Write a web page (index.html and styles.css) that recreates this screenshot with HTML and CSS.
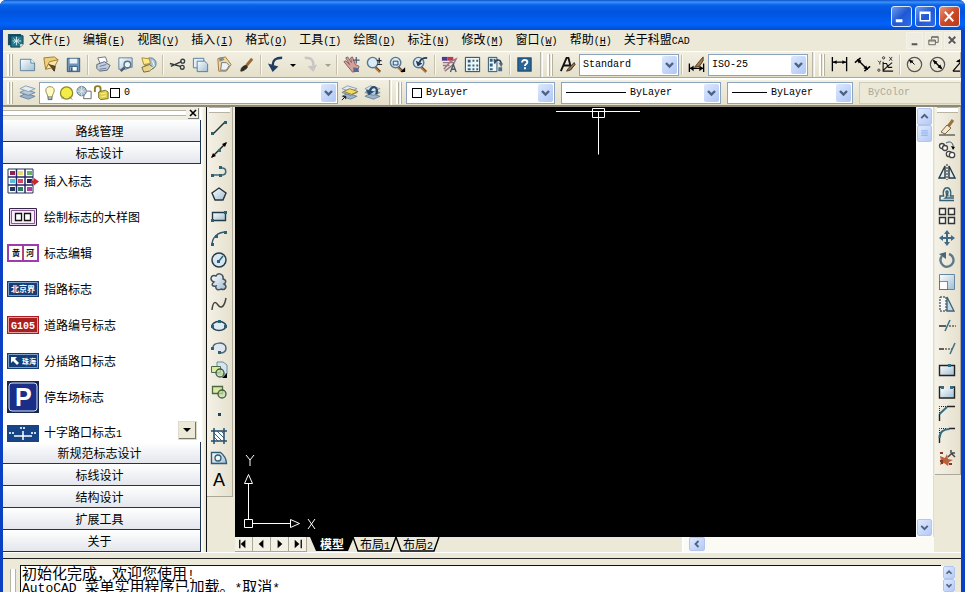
FILE: index.html
```html
<!DOCTYPE html>
<html lang="zh-CN">
<head>
<meta charset="utf-8">
<title>AutoCAD</title>
<link rel="stylesheet" href="styles.css">
</head>
<body>
<svg class="defs" aria-hidden="true">
  <defs>
    <linearGradient id="pale" x1="0" y1="0" x2="1" y2="1"><stop offset="0" stop-color="#fff"/><stop offset="1" stop-color="#9fbdd2"/></linearGradient>
    <symbol id="lens" viewBox="0 0 20 20"><path d="M10 12l6 6" stroke="#a87848" stroke-width="3"/><path d="M11 12l5 5" stroke="#5c4534" stroke-width="1"/><circle cx="8" cy="8" r="5.500" fill="#dcebf3" stroke="#587890" stroke-width="1.500"/></symbol>
    <symbol id="sheets" viewBox="0 0 20 20"><path d="M2 14l6-3 10 3-7 3z" fill="#9db4c8" stroke="#6d879e"/><path d="M2 10l6-3 10 3-7 3z" fill="#b8cbd9" stroke="#6d879e"/><path d="M2 6l6-3 10 3-7 3z" fill="#e2ecf2" stroke="#8ba0b2"/></symbol>
    <symbol id="down" viewBox="0 0 15 18"><path d="M4 7l3.500 3.500L11 7" fill="none" stroke="#4d6185" stroke-width="2.400"/></symbol>
    <symbol id="drop" viewBox="0 0 12 20"><path d="M3 9h6l-3 3z"/></symbol>
  </defs>
</svg>
<div class="app">
  <header class="title">
    <button class="win" aria-label="最小化"><svg viewBox="0 0 20 20"><path d="M4 13h7v3H4z" fill="#fff"/></svg></button>
    <button class="win" aria-label="最大化"><svg viewBox="0 0 20 20"><path d="M4.500 5.500h10v9h-10zM4 6.500h11" fill="none" stroke="#fff" stroke-width="1.600"/></svg></button>
    <button class="win close" aria-label="关闭"><svg viewBox="0 0 20 20"><path d="M5 5l9 10M14 5L5 15" stroke="#fff" stroke-width="2"/></svg></button>
  </header>
  <div class="frame">
    <nav class="menu">
      <svg class="logo" viewBox="0 0 18 18"><path d="M1 2h14v12H1z" fill="#174f68"/><path d="M4 4h13v9l-3 3H4z" fill="#257488" stroke="#103c50"/><path d="M10 5v9M6 9.500h9M7 7l6 5M13 7l-6 5" stroke="#d6f3f2"/><path d="M14 16v-3h3z" fill="#fff"/></svg>
      <button>文件<span class="m">(<u>F</u>)</span></button><button>编辑<span class="m">(<u>E</u>)</span></button><button>视图<span class="m">(<u>V</u>)</span></button><button>插入<span class="m">(<u>I</u>)</span></button><button>格式<span class="m">(<u>O</u>)</span></button><button>工具<span class="m">(<u>T</u>)</span></button><button>绘图<span class="m">(<u>D</u>)</span></button><button>标注<span class="m">(<u>N</u>)</span></button><button>修改<span class="m">(<u>M</u>)</span></button><button>窗口<span class="m">(<u>W</u>)</span></button><button>帮助<span class="m">(<u>H</u>)</span></button><button>关于科盟<span class="m">CAD</span></button>
      <div class="mdi">
        <button aria-label="最小化文档"><svg viewBox="0 0 16 16"><path d="M5 12h6" stroke="#555" stroke-width="2"/></svg></button>
        <button aria-label="还原文档"><svg viewBox="0 0 16 16"><path d="M6 7V4h7v6h-3M6 4.500h7M3 7.500h7v5H3zM3 8.500h7" fill="none" stroke="#66645c"/></svg></button>
        <button aria-label="关闭文档"><svg viewBox="0 0 16 16"><path d="M4 4l7 7M11 4l-7 7" stroke="#555" stroke-width="2"/></svg></button>
      </div>
    </nav>

    <div class="bar">
      <div class="band">
        <i class="grip"></i>
        <button class="tool" aria-label="新建"><svg viewBox="0 0 20 20"><path d="M2.500 4.500h11l4 4v8h-15z" fill="url(#pale)" stroke="#5c7f9c"/><path d="M13.500 4.500v4h4" fill="#fff" stroke="#5c7f9c"/></svg></button>
        <button class="tool" aria-label="打开"><svg viewBox="0 0 20 20"><path d="M3 3l11-1 4 3-8 3-5 7-1-5z" fill="#f0cf7c" stroke="#a17b2d"/><path d="M5 15l4-8 9-2-4 8z" fill="#fbe6a8" stroke="#a17b2d"/><path d="M8 10l7 2-1 5-2-2" fill="#654b23" stroke="#433418"/></svg></button>
        <button class="tool" aria-label="保存"><svg viewBox="0 0 20 20"><path d="M3.500 3.500h13v14h-13z" fill="#6f96ba" stroke="#34597c"/><path d="M6 4h8v5H6z" fill="#eaf1f5"/><path d="M6 12h8v5H6z" fill="#f8fafa" stroke="#34597c"/><path d="M8 13v4" stroke="#34597c" stroke-width="2"/></svg></button>
        <i class="sep"></i>
        <button class="tool" aria-label="打印"><svg viewBox="0 0 20 20"><path d="M5 3l8-1 2 5-7 3z" fill="#fff" stroke="#66758c"/><path d="M4 10l8-3 6 4-3 5-8 1-3-3z" fill="#c4cddc" stroke="#56657b"/><path d="M7 12l7-2M7 15l7-1" stroke="#667798"/></svg></button>
        <button class="tool" aria-label="打印预览"><svg viewBox="0 0 20 20"><path d="M3 3h14v10h-2l-5 2H3z" fill="url(#pale)" stroke="#5c7f9c"/><circle cx="12" cy="10" r="3.500" fill="#e9f3f8" stroke="#5c748a" stroke-width="1.500"/><path d="M9 13l-4 4" stroke="#4b5e70" stroke-width="2.500"/></svg></button>
        <button class="tool" aria-label="发布"><svg viewBox="0 0 20 20"><circle cx="12" cy="9" r="6" fill="#a9c3d8" stroke="#5a7890"/><path d="M3 3l8 1 1 5-7 1z" fill="#ffe887" stroke="#a88b32"/><path d="M3 13l8-3 4 3-4 4-6 1z" fill="#e7d58c" stroke="#77672e"/><path d="M14 6l2 5-4 4" fill="none" stroke="#fff"/></svg></button>
        <i class="sep"></i>
        <button class="tool" aria-label="剪切"><svg viewBox="0 0 20 20"><path d="M2 9l11 3M3 12l11-5" stroke="#303a3d" stroke-width="1.500"/><circle cx="15.500" cy="6.500" r="2" fill="none" stroke="#333c42" stroke-width="1.400"/><circle cx="15" cy="13" r="2" fill="none" stroke="#333c42" stroke-width="1.400"/></svg></button>
        <button class="tool" aria-label="复制"><svg viewBox="0 0 20 20"><path d="M2.500 3.500h11v10h-11z" fill="#e2eff6" stroke="#547c9b"/><path d="M6.500 6.500h8l3 3v8h-11z" fill="url(#pale)" stroke="#547c9b"/></svg></button>
        <button class="tool" aria-label="粘贴"><svg viewBox="0 0 20 20"><path d="M4 4l8-2 6 8-5 7H5z" fill="#f0d8a1" stroke="#a2783d"/><path d="M5 3l4-1 2 3-5 2z" fill="#848c93"/><path d="M8 8h5l3 3-3 5H7z" fill="#edf4f7" stroke="#6b7983"/></svg></button>
        <button class="tool" aria-label="特性匹配"><svg viewBox="0 0 20 20"><path d="M16 4l-6 7" stroke="#9b6b35" stroke-width="3"/><path d="M4 17c0-4 3-6 6-6l1 2c-2 2-4 4-7 4z" fill="#302c25" stroke="#302c25"/></svg></button>
        <i class="sep"></i>
        <button class="tool" aria-label="放弃"><svg viewBox="0 0 20 20"><path d="M17 3C9 3 7 6 7 11" fill="none" stroke="#223d61" stroke-width="2.600"/><path d="M2 9l11 3-6 6z" fill="#223d61"/></svg></button>
        <button class="drop" aria-label="放弃列表"><svg><use href="#drop"/></svg></button>
        <button class="tool" aria-label="重做"><svg viewBox="0 0 20 20"><path d="M4 3c8 0 9 3 9 8" fill="none" stroke="#c7c6c5" stroke-width="2.600"/><path d="M7 12l10-2-4 8z" fill="#c7c6c5"/></svg></button>
        <button class="drop off" aria-label="重做列表"><svg><use href="#drop"/></svg></button>
        <i class="sep"></i>
        <button class="tool" aria-label="平移"><svg viewBox="0 0 20 20"><path d="M2 7l2-1 4 4-4-7 2-1 4 6-1-5 2-1 3 8 4 2-2 5-5 1z" fill="#d5a09a" stroke="#855e63"/><path d="M12 13l5 1 1 4h-6z" fill="#536a91"/><path d="M15 2v7M11.500 5.500h7" stroke="#405a75" stroke-width="1.300"/></svg></button>
        <button class="tool" aria-label="实时缩放"><svg viewBox="0 0 20 20"><use href="#lens"/><path d="M15 3v6M12.500 6h5M13 10h5" stroke="#202c35" stroke-width="1.300"/></svg></button>
        <button class="tool" aria-label="窗口缩放"><svg viewBox="0 0 20 20"><use href="#lens"/><path d="M5.500 6.500h5v4h-5z" fill="none" stroke="#263d60"/><path d="M18 13v5h-5z"/></svg></button>
        <button class="tool" aria-label="缩放上一个"><svg viewBox="0 0 20 20"><use href="#lens"/><path d="M17 3c-5 0-7 1-8 5" fill="none" stroke="#233b58" stroke-width="2"/><path d="M5 6l7 3-5 3z" fill="#233b58"/></svg></button>
        <i class="sep"></i>
        <button class="tool" aria-label="特性"><svg viewBox="0 0 20 20"><path d="M2 2h6v4H2z" fill="#493c8e"/><path d="M8 2h6v4H8z" fill="#bd394e"/><path d="M3 8h12M3 11h7M4 15l7-8 6-3-3 6-9 7" fill="none" stroke="#967687" stroke-width="1.500"/><path d="M11 18l3-8 3 8M12 15h4" fill="none" stroke="#4a5866" stroke-width="1.400"/></svg></button>
        <button class="tool" aria-label="设计中心"><svg viewBox="0 0 20 20"><path d="M2.500 2.500h15v15h-15z" fill="#edf5f8" stroke="#1f3e5a"/><path d="M5 5h3v3H5zM10 5h2v2h-2zM14 5h2v2h-2zM5 10h3v2H5zM10 10h2v2h-2zM14 10h2v2h-2zM5 14h3v2H5zM10 14h2v2h-2zM14 14h2v2h-2z" fill="#35617c"/></svg></button>
        <button class="tool" aria-label="工具选项板"><svg viewBox="0 0 20 20"><path d="M2.500 2.500h9v15h-9z" fill="#edf5f8" stroke="#27506c"/><path d="M4 4h3v3H4zM8 4h2v3H8zM4 9h3v3H4zM4 14h3v2H4z" fill="#35617c"/><path d="M9 9c1-5 7-5 7 1" fill="none" stroke="#24405b" stroke-width="1.600"/><path d="M13 8l5 1-2 4zM13 13h4v4h-4z" fill="#526d83"/></svg></button>
        <i class="sep"></i>
        <button class="tool" aria-label="帮助"><svg viewBox="0 0 20 20"><rect x="3" y="3" width="14" height="14" fill="#286796" stroke="#163c60"/><path d="M7.500 8c0-4 5.500-3 5.500-.5 0 2-2.500 2-2.500 4" fill="none" stroke="#fff" stroke-width="2"/><path d="M9.500 13h2v2h-2z" fill="#fff"/></svg></button>
      </div>
      <div class="band">
        <i class="grip"></i>
        <button class="tool" aria-label="文字样式"><svg viewBox="0 0 20 20"><path d="M3 17L9 3h2l3 12M5 11h7" fill="none" stroke="#111" stroke-width="2"/><path d="M17 8l-6 6-2 3 4-1 5-6z" fill="#937456" stroke="#3f3126"/></svg></button>
        <label class="combo style"><select aria-label="文字样式"><option>Standard</option></select><svg class="arrow"><use href="#down"/></svg></label>
        <i class="sep"></i>
        <button class="tool" aria-label="标注样式"><svg viewBox="0 0 20 20"><path d="M2.500 9v9M17.500 9v9M3 14h14" stroke="#000" stroke-width="1.400"/><path d="M3 14l4-3v6zM17 14l-4-3v6z"/><path d="M17 2l-6 7-3 4 5-1 4-6z" fill="#a57945" stroke="#4e3b25"/></svg></button>
        <label class="combo style"><select aria-label="标注样式"><option>ISO-25</option></select><svg class="arrow"><use href="#down"/></svg></label>
      </div>
      <div class="band grow">
        <i class="grip"></i>
        <button class="tool" aria-label="线性标注"><svg viewBox="0 0 20 20"><path d="M2.500 2v15M17.500 2v15M3 7.500h14" stroke="#000" stroke-width="1.400"/><path d="M3 7.500l4-2v4zM17 7.500l-4-2v4z"/></svg></button>
        <button class="tool" aria-label="对齐标注"><svg viewBox="0 0 20 20"><path d="M2 8l6-5M12 17l6-5M5 5l10 10" stroke="#000" stroke-width="1.500"/><path d="M4 4l5 2-3 3zM16 16l-5-2 3-3z"/></svg></button>
        <button class="tool" aria-label="坐标标注"><svg viewBox="0 0 20 20"><path d="M7.500 7v10H18M8 9h3l2 4h4M12 12l5-4M8 16l4-4" fill="none" stroke="#111" stroke-width="1.200"/><circle cx="8" cy="3" r="1.200" fill="none" stroke="#333"/><circle cx="3" cy="16" r="1.200" fill="none" stroke="#333"/><path d="M14 2l3 4M17 2l-3 4M2 6l2 2 1-2M4 8v2" fill="none" stroke="#333"/></svg></button>
        <i class="sep"></i>
        <button class="tool" aria-label="半径标注"><svg viewBox="0 0 20 20"><circle cx="10" cy="10" r="7.500" fill="none" stroke="#555" stroke-width="1.300"/><path d="M10 10L6 6" stroke="#000"/><path d="M4 5l5 1-3 3z"/></svg></button>
        <button class="tool" aria-label="直径标注"><svg viewBox="0 0 20 20"><circle cx="10" cy="10" r="7.500" fill="none" stroke="#555" stroke-width="1.300"/><path d="M6 6l8 8" stroke="#000" stroke-width="1.500"/><path d="M5 5l5 2-3 3zM15 15l-5-2 3-3z"/></svg></button>
        <button class="tool" aria-label="角度标注"><svg viewBox="0 0 20 20"><path d="M2 17h16M2 17L14 3M7 6c4-1 7 3 8 9" fill="none" stroke="#000" stroke-width="1.300"/><path d="M5 7l5-3v4z"/></svg></button>
      </div>
    </div>

    <div class="bar">
      <div class="band layers">
        <i class="grip"></i>
        <button class="tool" aria-label="图层特性管理器"><svg viewBox="0 0 20 20"><use href="#sheets"/></svg></button>
        <label class="combo layer">
          <svg viewBox="0 0 18 18"><path d="M6 13c0-3-2-4-2-7 0-5 9-5 9 0 0 3-2 4-2 7z" fill="#fff9bd" stroke="#8c8a60"/><path d="M6.500 13v3h4v-3" fill="#b1bac1" stroke="#53606b"/></svg>
          <svg viewBox="0 0 18 18"><circle cx="8" cy="9" r="6.500" fill="#f5ed45" stroke="#8b8b31" stroke-width="1.400"/><path d="M3 15l2-2M11 13l3 3" stroke="#777"/></svg>
          <svg viewBox="0 0 18 18"><path d="M9 7h7v8H8z" fill="#fff" stroke="#666"/><circle cx="6" cy="7" r="5" fill="#9eb3c2" stroke="#61798a"/><path d="M6 2v10M1 7h10M3 4l6 6M9 4l-6 6" stroke="#dce7ed"/></svg>
          <svg viewBox="0 0 18 18"><path d="M2 8V4c0-3 6-3 6 0v5" fill="none" stroke="#8b7b24" stroke-width="2"/><path d="M6 8l7-2 3 2v7l-8 1-2-2z" fill="#dfcf4e" stroke="#786c22"/><path d="M8 10l6-1M9 13l5-1" stroke="#fff29a"/></svg>
          <i class="swatch"></i>
          <select aria-label="图层"><option>0</option></select><svg class="arrow"><use href="#down"/></svg>
        </label>
        <button class="tool" aria-label="置为当前图层"><svg viewBox="0 0 20 20"><use href="#sheets"/><path d="M4 9l6-3 9 3-7 3z" fill="#f4dc60" stroke="#8f7a29"/><path d="M2 18l4-4M3 14h3v3" fill="none" stroke="#111"/></svg></button>
        <button class="tool" aria-label="上一个图层"><svg viewBox="0 0 20 20"><use href="#sheets"/><path d="M14 12c3-8-5-11-7-3" fill="none" stroke="#294c70" stroke-width="2.400"/><path d="M3 7l9 2-6 4z" fill="#294c70"/></svg></button>
      </div>
      <div class="band props">
        <i class="grip"></i>
        <label class="combo color"><i class="swatch"></i><select aria-label="颜色"><option>ByLayer</option></select><svg class="arrow"><use href="#down"/></svg></label>
        <label class="combo ltype"><i class="rule"></i><select aria-label="线型"><option>ByLayer</option></select><svg class="arrow"><use href="#down"/></svg></label>
        <label class="combo lweight"><i class="rule"></i><select aria-label="线宽"><option>ByLayer</option></select><svg class="arrow"><use href="#down"/></svg></label>
        <label class="combo plot"><select aria-label="打印样式" disabled><option>ByColor</option></select></label>
      </div>
    </div>

    <main class="work">
      <aside class="panel">
        <div class="panelhead"><i></i><button aria-label="关闭面板"><svg viewBox="0 0 10 10"><path d="M2 2l6 6M8 2L2 8" stroke="#000" stroke-width="1.600"/></svg></button></div>
        <button class="fold">路线管理</button>
        <button class="fold">标志设计</button>
        <div class="signs">
          <button><svg viewBox="0 0 32 32"><path d="M1 4h25v24H1z" fill="#fff" stroke="#203060"/><path d="M1 12h25M1 20h25M9.500 4v24M18 4v24" stroke="#252b68" stroke-width="1.500"/><path d="M3 6h5v4H3z" fill="#8d2350"/><path d="M11 6h5v4h-5z" fill="#eadc72"/><path d="M20 6h5v4h-5z" fill="#61b565"/><path d="M3 14h5v4H3z" fill="#54bedf"/><path d="M11 14h5v4h-5z" fill="#d34a60"/><path d="M20 14h5v4h-5z" fill="#24215a"/><path d="M3 22h5v4H3z" fill="#26375d"/><path d="M11 22h5v4h-5z" fill="#36785c"/><path d="M20 22h5v4h-5z" fill="#b13da2"/><path d="M27 13l5 3.500-5 4v-2h-3v-3h3z" fill="#c8282d"/></svg><span>插入标志</span></button>
          <button><svg viewBox="0 0 32 32"><path d="M2.500 7.500h27v17h-27z" fill="#f1daf4" stroke="#34284d"/><path d="M4.500 9.500h23v13h-23z" fill="#f9edfa" stroke="#8d5792"/><path d="M8.500 12.500h6v7h-6zM17.500 12.500h6v7h-6z" fill="#fff" stroke="#111" stroke-width="1.300"/></svg><span>绘制标志的大样图</span></button>
          <button><svg viewBox="0 0 32 32"><path d="M1 8h30v16H1zM16 8v16" fill="#fff" stroke="#9d3dab" stroke-width="2"/><path d="M16 10v12" stroke="#c8504e"/><text x="5" y="19" class="dark">黄</text><text x="19" y="19" class="dark">河</text></svg><span>标志编辑</span></button>
          <button><svg viewBox="0 0 32 32"><path d="M0 8h32v16H0z" fill="#153d76"/><path d="M1.500 9.500h29v13h-29z" fill="none" stroke="#7fa0c8"/><text x="4" y="19">北京界</text></svg><span>指路标志</span></button>
          <button><svg viewBox="0 0 32 32"><path d="M0 7h32v18H0z" fill="#aa1d21"/><path d="M1.500 8.500h29v15h-29z" fill="none" stroke="#e7a19d"/><text x="4" y="20" class="route">G105</text></svg><span>道路编号标志</span></button>
          <button><svg viewBox="0 0 32 32"><path d="M0 8h32v16H0z" fill="#153d76"/><path d="M1.500 9.500h29v13h-29z" fill="none" stroke="#7fa0c8"/><path d="M4 12h6l-2 2 4 4-2 2-4-4-2 2z" fill="#fff"/><text x="15" y="19" class="small">珠海</text></svg><span>分插路口标志</span></button>
          <button><svg viewBox="0 0 32 32"><path d="M0 0h32v32H0z" fill="#16264d"/><rect x="2" y="2" width="28" height="28" rx="3" fill="#1a2e88" stroke="#d6e2fa"/><text x="8" y="25" class="park">P</text></svg><span>停车场标志</span></button>
          <button><svg viewBox="0 0 32 32"><path d="M0 8h32v17H0z" fill="#174487"/><path d="M7 19h18M16 14v9" stroke="#fff" stroke-width="1.500"/><path d="M13 11h6M2 16h6M24 16h6" stroke="#c9daf0" stroke-width="2" stroke-dasharray="2 1"/></svg><span>十字路口标志<span class="m">1</span></span></button>
          <button class="more" aria-label="向下滚动"><svg viewBox="0 0 16 16"><path d="M4 6h8l-4 4z"/></svg></button>
        </div>
        <button class="fold">新规范标志设计</button>
        <button class="fold">标线设计</button>
        <button class="fold">结构设计</button>
        <button class="fold">扩展工具</button>
        <button class="fold">关于</button>
      </aside>

      <div class="side draw">
        <i class="gripv"></i>
        <button aria-label="直线"><svg viewBox="0 0 20 20"><path d="M4 16L16 4" stroke="#233" stroke-width="1.400"/><path d="M2 14h3v3H2zM15 3h3v3h-3z" fill="#276276"/></svg></button>
        <button aria-label="构造线"><svg viewBox="0 0 20 20"><path d="M3 17L17 3" stroke="#222" stroke-width="1.400"/><path d="M2 18l2-5 3 3zM18 2l-5 2 3 3z"/><path d="M9 9h3v3H9z" fill="#2d7188"/></svg></button>
        <button aria-label="多段线"><svg viewBox="0 0 20 20"><path d="M3 13h10c5 0 5-7 0-7" fill="none" stroke="#416a78" stroke-width="1.600"/><path d="M2 12h3v3H2zM10 12h3v3h-3zM10 4h3v3h-3z" fill="#276276"/></svg></button>
        <button aria-label="正多边形"><svg viewBox="0 0 20 20"><path d="M10 4l7 5-3 7H6L3 9z" fill="url(#pale)" stroke="#27343c" stroke-width="1.400"/></svg></button>
        <button aria-label="矩形"><svg viewBox="0 0 20 20"><path d="M3.500 6.500h13v8h-13z" fill="url(#pale)" stroke="#233b49" stroke-width="1.400"/><path d="M2 13h3v3H2zM15 5h3v3h-3z" fill="#276276"/></svg></button>
        <button aria-label="圆弧"><svg viewBox="0 0 20 20"><path d="M3 17C3 10 8 4 17 4" fill="none" stroke="#345768" stroke-width="1.400"/><path d="M2 15h3v3H2zM6 7h3v3H6zM15 3h3v3h-3z" fill="#276276"/></svg></button>
        <button aria-label="圆"><svg viewBox="0 0 20 20"><circle cx="10" cy="10" r="7" fill="#d9e7f2" stroke="#263b49" stroke-width="1.500"/><path d="M10 11l4-5" stroke="#276276" stroke-width="1.500"/><path d="M8 10h3v3H8z" fill="#276276"/></svg></button>
        <button aria-label="修订云线"><svg viewBox="0 0 20 20"><path d="M5 10C0 8 2 2 7 4c2-4 8-2 7 3 4 1 3 4 1 5 4 2 1 7-3 5-3 2-6 0-5-3-4 1-5-2-2-4z" fill="url(#pale)" stroke="#45515a" stroke-width="1.500"/></svg></button>
        <button aria-label="样条曲线"><svg viewBox="0 0 20 20"><path d="M3 16C4 6 7 8 9 11s6 4 8-7" fill="none" stroke="#454540" stroke-width="1.500"/></svg></button>
        <button aria-label="椭圆"><svg viewBox="0 0 20 20"><ellipse cx="10" cy="10" rx="7" ry="4.500" fill="#dcebf4" stroke="#294454" stroke-width="1.600"/><path d="M2 9h3v3H2zM15 9h3v3h-3zM9 4h3v3H9z" fill="#276276"/></svg></button>
        <button aria-label="椭圆弧"><svg viewBox="0 0 20 20"><path d="M4 10c-1-6 13-7 13 0 0 4-3 5-6 5" fill="#dde7f2" stroke="#506573" stroke-width="1.500"/><path d="M2 9h3v3H2zM9 13h3v3H9z" fill="#276276"/></svg></button>
        <button aria-label="插入块"><svg viewBox="0 0 20 20"><path d="M8 2h6l4 3v9H8z" fill="#d5e5ef" stroke="#6a8ba1"/><path d="M2.500 6.500h9v6h-9z" fill="#d9eaa1" stroke="#4c6844"/><circle cx="11" cy="13" r="4" fill="#c9dfa0" fill-opacity=".7" stroke="#3f5a4c" stroke-width="1.300"/><path d="M18 13v5h-5z"/></svg></button>
        <button aria-label="创建块"><svg viewBox="0 0 20 20"><path d="M3.500 4.500h10v7h-10z" fill="#d9eaa1" stroke="#4c6844" stroke-width="1.300"/><circle cx="13" cy="12" r="4" fill="#c9dfa0" fill-opacity=".7" stroke="#3f5a4c" stroke-width="1.300"/></svg></button>
        <button aria-label="点"><svg viewBox="0 0 20 20"><path d="M9 9h3v3H9z" fill="#1c465c"/></svg></button>
        <button aria-label="图案填充"><svg viewBox="0 0 20 20"><path d="M5 5h10v10H5z" fill="#fff"/><path d="M5 7l8 8M5 11l4 4M8 5l7 7M12 5l3 3" stroke="#396987"/><path d="M5 2v16M15 2v16M2 5h16M2 15h16" stroke="#254e69" stroke-width="1.500"/></svg></button>
        <button aria-label="面域"><svg viewBox="0 0 20 20"><path d="M2.500 4.500h9c4 3 6 6 6 11h-15z" fill="url(#pale)" stroke="#315d77" stroke-width="1.400"/><circle cx="9" cy="10" r="3" fill="#f4f7f8" stroke="#315d77" stroke-width="1.300"/></svg></button>
        <button aria-label="多行文字"><span class="letter">A</span></button>
      </div>

      <section class="view">
        <div class="drawing">
          <div class="canvas">
            <svg class="cross" viewBox="0 0 86 48"><path d="M1 3.500h84M43.500 3.500v43M37.500.5h12v9h-12z" fill="none" stroke="#fff"/></svg>
            <svg class="ucs" viewBox="0 0 84 84"><path d="M4.500 69.500h8v8h-8zM8.500 69V34M13 73.500h37M8.500 24.500l-4 9h8zM50.500 69.500l9 4-9 4z" fill="none" stroke="#fff"/><path d="M6 5l4 5 4-5M10 10v6M68 69l7 10M75 69l-7 10" fill="none" stroke="#fff"/></svg>
          </div>
          <div class="vscroll">
            <button aria-label="向上"><svg viewBox="0 0 16 16"><path d="M4 10l4-4 4 4" fill="none" stroke="#4d6185" stroke-width="2.400"/></svg></button>
            <button aria-label="滚动块"><svg viewBox="0 0 16 16"><path d="M4 4.500h8M4 6.500h8M4 8.500h8M4 10.500h8" stroke="#8db0e8"/></svg></button>
            <button class="end" aria-label="向下"><svg viewBox="0 0 16 16"><path d="M4 6l4 4 4-4" fill="none" stroke="#4d6185" stroke-width="2.400"/></svg></button>
          </div>
        </div>
        <div class="tabs">
          <button class="nav" aria-label="第一个"><svg viewBox="0 0 18 15"><path d="M5 3v9" stroke="#000" stroke-width="1.400"/><path d="M11 3v9L6 7.500z"/></svg></button>
          <button class="nav" aria-label="上一个"><svg viewBox="0 0 18 15"><path d="M11 3v9L6 7.500z"/></svg></button>
          <button class="nav" aria-label="下一个"><svg viewBox="0 0 18 15"><path d="M7 3v9l5-4.500z"/></svg></button>
          <button class="nav" aria-label="最后一个"><svg viewBox="0 0 18 15"><path d="M13 3v9" stroke="#000" stroke-width="1.400"/><path d="M6 3v9l5-4.500z"/></svg></button>
          <button class="tab on"><svg viewBox="0 0 46 15" preserveAspectRatio="none"><path d="M1 0l6 14h32l6-14z"/></svg><span>模型</span></button>
          <button class="tab"><svg viewBox="0 0 46 15" preserveAspectRatio="none"><path d="M1 0l5 14h33l5-14" fill="#ece9d8" stroke="#000" stroke-width="1.400"/></svg><span>布局<span class="m">1</span></span></button>
          <button class="tab"><svg viewBox="0 0 46 15" preserveAspectRatio="none"><path d="M1 0l5 14h33l5-14" fill="#ece9d8" stroke="#000" stroke-width="1.400"/></svg><span>布局<span class="m">2</span></span></button>
          <div class="hscroll"><button aria-label="向左"><svg viewBox="0 0 16 16"><path d="M10 4L6 8l4 4" fill="none" stroke="#4d6185" stroke-width="2.400"/></svg></button></div>
        </div>
      </section>

      <div class="side modify">
        <i class="gripv"></i>
        <button aria-label="删除"><svg viewBox="0 0 20 20"><path d="M16 2l-6 8" stroke="#98733d" stroke-width="3"/><path d="M4 14l6-7 4 3-6 6z" fill="#f4e9cf" stroke="#7e6242"/><path d="M2 17h16" stroke="#222"/></svg></button>
        <button aria-label="复制对象"><svg viewBox="0 0 20 20"><path d="M9 3c5-3 8 1 7 5" fill="none" stroke="#39576b"/><circle cx="5" cy="6" r="2.500" fill="#fff" stroke="#444" stroke-width="1.300"/><circle cx="8" cy="8" r="2.500" fill="#fff" stroke="#444" stroke-width="1.300"/><circle cx="12" cy="14" r="2.700" fill="#fff" stroke="#444" stroke-width="1.300"/><circle cx="15" cy="15" r="2.700" fill="#fff" stroke="#444" stroke-width="1.300"/><path d="M14 6l4 1-2 3z"/></svg></button>
        <button aria-label="镜像"><svg viewBox="0 0 20 20"><path d="M8 4v12H2zM12 4v12h6z" fill="#e1ebf2" stroke="#243a48" stroke-width="1.400"/><path d="M10 2v16" stroke="#222" stroke-dasharray="2 1"/></svg></button>
        <button aria-label="偏移"><svg viewBox="0 0 20 20"><path d="M17 16.500H3V12h3.500C4 1 16 1 13.500 12H17M17 14H8.500c3-2-1-7 1.500-7s-1 5 1.500 5" fill="none" stroke="#376276" stroke-width="1.500"/></svg></button>
        <button aria-label="阵列"><svg viewBox="0 0 20 20"><path d="M2.500 2.500h6v6h-6zM11.500 2.500h6v6h-6zM2.500 11.500h6v6h-6zM11.500 11.500h6v6h-6z" fill="#f8f8f3" stroke="#333" stroke-width="1.400"/></svg></button>
        <button aria-label="移动"><svg viewBox="0 0 20 20"><path d="M10 4v12M4 10h12" stroke="#416a87" stroke-width="2"/><path d="M10 2l3 4H7zM10 18l3-4H7zM2 10l4-3v6zM18 10l-4-3v6z" fill="#416a87"/></svg></button>
        <button aria-label="旋转"><svg viewBox="0 0 20 20"><path d="M12 4a6.500 6.500 0 1 1-7 2" fill="none" stroke="#60798a" stroke-width="2.400"/><path d="M2 4l7-2v7z" fill="#496779"/></svg></button>
        <button aria-label="缩放"><svg viewBox="0 0 20 20"><path d="M2.500 2.500h15v15h-15z" fill="url(#pale)" stroke="#6488a1"/><path d="M2.500 9.500h8v8h-8z" fill="#fff" stroke="#222" stroke-dasharray="1 1"/></svg></button>
        <button aria-label="拉伸"><svg viewBox="0 0 20 20"><path d="M3 3h6v14H3z" fill="#f5f8f9" stroke="#222" stroke-dasharray="2 1"/><path d="M10 3l7 14h-7z" fill="#c6d9e5" stroke="#3d6179" stroke-width="1.300"/></svg></button>
        <button aria-label="修剪"><svg viewBox="0 0 20 20"><path d="M2 10h7" stroke="#222" stroke-width="1.400"/><path d="M12 10h7" stroke="#222" stroke-dasharray="2 1"/><path d="M8 15l5-11" stroke="#397087" stroke-width="1.500"/></svg></button>
        <button aria-label="延伸"><svg viewBox="0 0 20 20"><path d="M2 11h5" stroke="#222" stroke-width="1.400"/><path d="M8 11h7" stroke="#222" stroke-dasharray="2 1"/><path d="M13 16l5-11" stroke="#397087" stroke-width="1.500"/></svg></button>
        <button aria-label="打断于点"><svg viewBox="0 0 20 20"><path d="M2.500 5.500h15v10h-15z" fill="url(#pale)" stroke="#222" stroke-width="1.400"/><path d="M11 4h3v3h-3z" fill="#356b82"/></svg></button>
        <button aria-label="打断"><svg viewBox="0 0 20 20"><path d="M3 6h14v10H3z" fill="url(#pale)"/><path d="M5 5H2.500v11h15V5H14" fill="none" stroke="#222" stroke-width="1.400"/><path d="M4 4h3v3H4zM13 4h3v3h-3z" fill="#356b82"/></svg></button>
        <button aria-label="倒角"><svg viewBox="0 0 20 20"><path d="M2.500 9V2.500H10" fill="none" stroke="#222" stroke-dasharray="1 1"/><path d="M2.500 17v-7M10 2.500h8" stroke="#222" stroke-width="1.400"/><path d="M2.500 10L10 3" stroke="#356b82" stroke-width="2"/></svg></button>
        <button aria-label="圆角"><svg viewBox="0 0 20 20"><path d="M2.500 9V2.500H10" fill="none" stroke="#222" stroke-dasharray="1 1"/><path d="M2.500 17v-5M12 2.500h6" stroke="#222" stroke-width="1.400"/><path d="M2.500 12c0-6 4-9 10-9" fill="none" stroke="#356b82" stroke-width="2.200"/></svg></button>
        <button aria-label="分解"><svg viewBox="0 0 20 20"><path d="M3 8l5 2 2-4 1 5 5 1-4 2-1 4-4-3-4 2 1-4z" fill="#bd6138"/><path d="M3 5h3M3 13h2v3M12 16h3" stroke="#823a25" stroke-width="2"/><path d="M11 9l4-4M14 2v3M18 5h-3M18 9l-3-3" stroke="#444" stroke-width="1.500"/></svg></button>
      </div>
    </main>

    <footer class="command">
      <i class="gripc"></i>
      <div class="log" role="log"><p>初始化完成，欢迎您使用<span class="wide">!</span></p><p><span class="wide">AutoCAD </span>菜单实用程序已加载。<span class="wide">*</span>取消<span class="wide">*</span></p></div>
      <div class="cscroll"><button aria-label="向上滚动"><svg viewBox="0 0 12 13"><path d="M3 8l3-3 3 3" fill="none" stroke="#4d6185" stroke-width="2"/></svg></button><button aria-label="向下滚动"><svg viewBox="0 0 12 13"><path d="M3 5l3 3 3-3" fill="none" stroke="#4d6185" stroke-width="2"/></svg></button></div>
    </footer>
  </div>
</div>
</body>
</html>
```
FILE: styles.css
```css
* { box-sizing: border-box; }
body { margin: 0; color: #000; background: #fff; font: 12px/16px "Noto Sans CJK SC", sans-serif; }
button { display: block; flex: none; margin: 0; padding: 0; border: 0; background: none; color: inherit; font: inherit; }
svg { display: block; flex: none; }
i { display: block; flex: none; }
p { margin: 0; }
.defs { position: absolute; width: 0; height: 0; }
.m { font-family: "Liberation Mono", monospace; font-size: 10px; }

.app { display: flex; flex-direction: column; height: 100vh; overflow: hidden; border-radius: 6px 6px 0 0; background: #0b3fc4; }
.title { display: flex; flex: none; align-items: center; justify-content: flex-end; gap: 3px; height: 30px; padding: 3px 5px 0 0; background: linear-gradient(#0a4fc8 0, #3d92fb 2px, #0862e8 5px, #0053de 12px, #0262f8 24px, #0150dd 29px); }
.win { width: 21px; height: 21px; border: 1px solid #dce8fb; border-radius: 3px; background: linear-gradient(135deg, #6b9bf0, #2158d3 50%, #2c6cec); }
.win svg { width: 19px; height: 19px; }
.win.close { background: linear-gradient(135deg, #ea9478, #cc4926 50%, #b93917); }
.frame { display: flex; flex: 1; flex-direction: column; min-height: 0; margin: 0 4px 0 3px; background: #ece9d8; }

.menu { display: flex; flex: none; align-items: center; gap: 12px; height: 21px; padding-left: 4px; white-space: nowrap; }
.logo { width: 17px; height: 17px; margin-right: -7px; }
.mdi { display: flex; gap: 2px; margin-left: auto; }
.mdi button { width: 17px; height: 17px; border: 1px solid #f3f1e8; background: #efede2; }
.mdi svg { width: 15px; height: 15px; }

.bar { display: flex; flex: none; height: 27px; overflow: hidden; border-top: 1px solid #fff; border-bottom: 1px solid #aca899; }
.bar + .bar { height: 29px; border-top-width: 2px; border-bottom: 2px solid #8d8a7c; }
.band { display: flex; flex: none; align-items: center; padding: 0 4px; border-right: 1px solid #b9b5a2; background: linear-gradient(#f2efe3, #e5e0ca); }
.band + .band { margin-left: 1px; border-left: 1px solid #fff; }
.band.grow { flex: 1; min-width: 0; overflow: hidden; }
.grip { width: 6px; height: 22px; margin-right: 3px; border: solid #fff; border-width: 0 1px 0 2px; border-right-color: #b5b19f; background: linear-gradient(90deg, #b5b19f 1px, #eeeadb 1px, #eeeadb 2px, #fff 2px); }
.tool { width: 23px; height: 23px; }
.tool svg { width: 19px; height: 19px; margin: 0 2px; }
.drop { width: 12px; }
.drop svg { width: 12px; height: 20px; }
.off { opacity: .3; }
.sep { width: 2px; height: 20px; margin: 0 2px; border-left: 1px solid #c5c1ae; border-right: 1px solid #faf9f2; }
.combo { position: relative; display: flex; flex: none; align-items: center; height: 22px; padding-left: 3px; border: 1px solid #8ba3bd; background: #fff; }
.combo select { flex: 1; min-width: 0; height: 18px; padding: 0; border: 0; appearance: none; background: transparent; color: #000; font: 10px/18px "Liberation Mono", monospace; }
.combo > svg { width: 17px; height: 18px; }
.combo .arrow { position: absolute; top: 1px; right: 1px; width: 15px; height: 18px; border-radius: 2px; background: linear-gradient(135deg, #dce8fe, #b0c6f4); pointer-events: none; }
.style { width: 100px; }
.layer { width: 299px; padding-left: 2px; }
.swatch { width: 10px; height: 10px; margin-right: 4px; border: 1px solid #000; background: #fff; }
.rule { height: 1px; background: #000; }
.band.props { flex: 1; gap: 6px; min-width: 0; padding-right: 0; border-right: 0; }
.band.props .grip { margin-right: -2px; }
.band.layers { padding-right: 5px; }
.color { width: 149px; padding-left: 5px; }
.ltype { width: 160px; padding-left: 4px; }
.ltype .rule { width: 60px; margin-right: 4px; }
.lweight { width: 126px; padding-left: 4px; }
.lweight .rule { width: 35px; margin-right: 4px; }
.combo.plot { flex: 1; padding-left: 8px; border-color: #d0ccba; background: #ece9d8; }
.plot select:disabled { color: #aca899; opacity: 1; }

.work { display: flex; flex: 1; min-height: 0; }
.panel { display: flex; flex: none; flex-direction: column; width: 204px; padding-right: 6px; border-right: 1px solid #111; background: linear-gradient(90deg, #fff 198px, #ece9d8 202px); }
.panelhead { display: flex; flex: none; align-items: center; gap: 2px; height: 13px; padding: 0 1px 1px 0; background: #f1eee3; }
.panelhead i { flex: 1; height: 6px; border: solid #b8b4a3; border-width: 1px 0; background: #fff; }
.panelhead button { width: 11px; height: 11px; border: 1px solid #777; border-width: 0 1px 1px 0; }
.panelhead svg { width: 10px; height: 10px; }
.fold { width: 198px; height: 22px; padding-right: 4px; border: solid #1d3557; border-width: 0 1px 1px 0; background: linear-gradient(#fff, #e4e6ec); text-align: center; }
.signs { position: relative; flex: 1; min-height: 0; padding-right: 6px; overflow: hidden; background: #fff; }
.signs > button { display: flex; align-items: center; gap: 5px; width: 100%; height: 36px; padding: 0 0 2px 4px; white-space: nowrap; }
.signs button > svg { width: 32px; height: 32px; }
.signs > .more { position: absolute; right: 4px; bottom: 3px; width: 17px; height: 17px; padding: 0; border: 1px solid #77756c; border-width: 0 1px 1px 0; background: #ece9d8; box-shadow: 0 0 0 1px #dedbcd; }
.signs .more svg { width: 16px; height: 16px; }
.signs text { fill: #fff; font-size: 8px; font-weight: 700; }
.signs .dark { fill: #111; }
.signs .route { font: 700 10px "Liberation Mono", monospace; }
.signs .small { font-size: 7px; }
.signs .park { font: 700 25px "Liberation Sans", sans-serif; }

.side { flex: none; align-self: flex-start; width: 26px; padding-bottom: 5px; border: solid #aca899; border-width: 0 1px 1px 0; background: linear-gradient(90deg, #f4f1e7, #e6e1ce); }
.side button { display: flex; align-items: center; justify-content: center; width: 24px; height: 22px; }
.side svg { width: 20px; height: 20px; }
.gripv { height: 6px; margin: 0 2px 4px; border: solid #b8b4a3; border-width: 1px 0; background: #fff; }
.letter { font: 18px/22px "Liberation Sans", sans-serif; }
.view { display: flex; flex: 1; flex-direction: column; min-width: 0; margin-left: 2px; }
.drawing { display: flex; flex: 1; min-height: 0; }
.canvas { position: relative; flex: 1; overflow: hidden; background: #000; }
.cross { position: absolute; top: 1px; left: 320px; width: 86px; height: 48px; }
.ucs { position: absolute; bottom: 3px; left: 5px; width: 84px; height: 84px; }
.vscroll { display: flex; flex: none; flex-direction: column; width: 18px; padding: 1px 1px 1px 0; border-right: 1px solid #e0ddcf; background: #fcfcfa; }
.vscroll button, .hscroll button, .cscroll button { border: 1px solid #b1c6ef; border-radius: 2px; background: linear-gradient(135deg, #e0eafe, #b5c9f4); }
.vscroll button { width: 15px; height: 17px; margin-left: 1px; }
.vscroll svg { width: 13px; height: 15px; }
.vscroll .end { margin-top: auto; }
.tabs { display: flex; flex: none; height: 15px; }
.nav { width: 18px; height: 15px; border: 1px solid #aca899; border-width: 0 1px 1px 0; background: #f3f1e6; }
.nav svg { width: 17px; height: 14px; }
.tab { position: relative; width: 46px; height: 15px; margin-right: -3px; line-height: 13px; }
.nav + .tab { margin-left: 2px; }
.tab svg { width: 46px; height: 15px; }
.tab > span { position: absolute; inset: 0; }
.tab.on { color: #fff; font-weight: 700; }
.hscroll { width: 36%; height: 15px; margin-left: auto; padding-left: 5px; border-left: 2px solid #fff; background: #fbfaf5; }
.hscroll button { width: 16px; height: 14px; }
.hscroll svg { width: 14px; height: 12px; }
.modify { margin-left: 1px; }

.command { display: flex; flex: none; height: 40px; padding-top: 6px; border-top: 1px solid #fff; background: linear-gradient(transparent 5px, #222 5px, #222 6px, transparent 6px); }
.gripc { width: 6px; margin: 10px 4px 0 7px; border: solid #b8b4a3; border-width: 0 1px; background: #fff; }
.log { flex: 1; min-width: 0; margin-top: 6px; padding-left: 1px; border: solid #111; border-width: 1px 0 0 1px; background: #fff; font-size: 15px; line-height: 13px; white-space: pre; }
.log p { height: 13px; }
.wide { font-family: "Liberation Mono", monospace; font-size: 13px; line-height: 1px; }
.cscroll { flex: none; width: 20px; margin-top: 7px; padding-left: 2px; background: linear-gradient(90deg, #fff 14px, #ece9d8 14px); }
.cscroll button { width: 12px; height: 13px; }
.cscroll svg { width: 10px; height: 11px; }
```
